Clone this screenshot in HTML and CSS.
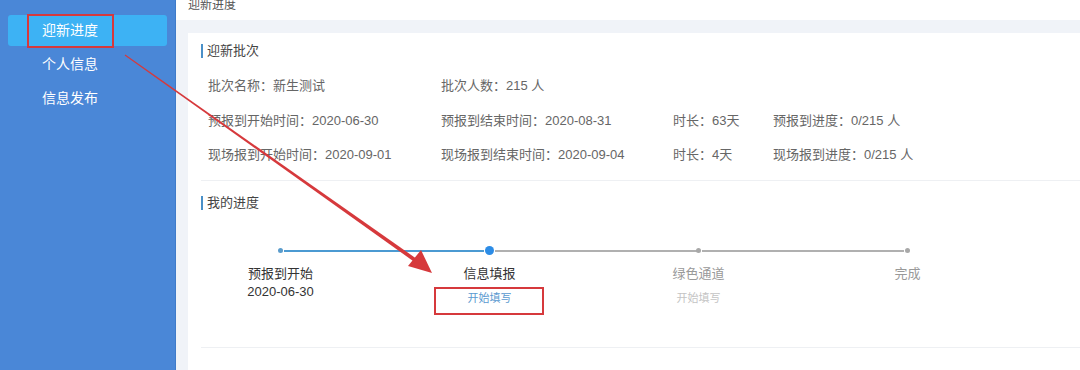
FILE: index.html
```html
<!DOCTYPE html>
<html lang="zh-CN">
<head>
    <meta charset="UTF-8">
    <title>迎新进度</title>
    <link rel="stylesheet" href="styles.css">
</head>
<body>
    <div class="app">
        <div class="sidebar">
            <div class="nav-item active">迎新进度</div>
            <div class="nav-item">个人信息</div>
            <div class="nav-item">信息发布</div>
        </div>

        <div class="main">
            <div class="topbar">迎新进度</div>

            <div class="card">
                <div class="section-title">迎新批次</div>
                <div class="info-grid">
                    <div>批次名称：新生测试</div>
                    <div>批次人数：215 人</div>
                    <div></div>
                    <div></div>

                    <div>预报到开始时间：2020-06-30</div>
                    <div>预报到结束时间：2020-08-31</div>
                    <div>时长：63天</div>
                    <div>预报到进度：0/215 人</div>

                    <div>现场报到开始时间：2020-09-01</div>
                    <div>现场报到结束时间：2020-09-04</div>
                    <div>时长：4天</div>
                    <div>现场报到进度：0/215 人</div>
                </div>

                <div class="divider"></div>

                <div class="section-title">我的进度</div>
                <div class="steps">
                    <div class="step done">
                        <div class="step-head"><span class="dot"></span></div>
                        <div class="step-title">预报到开始</div>
                        <div class="step-desc">2020-06-30</div>
                    </div>
                    <div class="step current">
                        <div class="step-head"><span class="dot"></span></div>
                        <div class="step-title">信息填报</div>
                        <div class="step-link">开始填写</div>
                    </div>
                    <div class="step">
                        <div class="step-head"><span class="dot"></span></div>
                        <div class="step-title">绿色通道</div>
                        <div class="step-link">开始填写</div>
                    </div>
                    <div class="step last">
                        <div class="step-head"><span class="dot"></span></div>
                        <div class="step-title">完成</div>
                    </div>
                </div>

                <div class="divider bottom"></div>
            </div>
        </div>
    </div>

    <!-- 标注：红框与箭头 -->
    <svg class="annotations" width="1080" height="370" viewBox="0 0 1080 370">
        <rect x="28" y="15" width="85" height="32" fill="none" stroke="#d6393c" stroke-width="2"/>
        <rect x="435" y="288" width="108" height="26" fill="none" stroke="#d6393c" stroke-width="2"/>
        <polygon points="124.7,55.4 125.3,54.6 417.2,259.2 414.8,262.2" fill="#d6393c"/>
        <polygon points="432,273 408,266 421,250" fill="#d6393c"/>
    </svg>
</body>
</html>
```

FILE: styles.css
```css
body {
    margin: 0;
    width: 1080px;
    height: 370px;
    overflow: hidden;
    font-family: "Liberation Sans", "Noto Sans CJK SC", sans-serif;
    color: #333;
    position: relative;
}
.app {
    display: flex;
    height: 370px;
}
.sidebar {
    width: 159px;
    padding: 15px 8px;
    background-color: #4a87d7;
    border-right: 1px solid #3f7bc9;
}
.nav-item {
    height: 31px;
    line-height: 31px;
    padding-left: 34px;
    margin-bottom: 3px;
    color: #fff;
    font-size: 14px;
    border-radius: 3px;
}
.nav-item.active {
    background-color: #3db2f4;
}
.main {
    flex: 1;
    background-color: #f0f3f8;
    display: flex;
    flex-direction: column;
}
.topbar {
    height: 20px;
    background: #fff;
    padding-left: 12px;
    font-size: 12px;
    line-height: 10px;
    color: #555;
    margin-bottom: 13px;
}
.card {
    flex: 1;
    margin-left: 12px;
    background: #fff;
    padding: 11px 0 0 13px;
}
.section-title {
    height: 14px;
    line-height: 14px;
    border-left: 2px solid #4a90c8;
    padding-left: 4px;
    font-size: 13px;
    color: #444;
}
.info-grid {
    display: grid;
    grid-template-columns: 233px 232px 100px auto;
    grid-auto-rows: 34.5px;
    padding: 18px 0 0 7px;
    font-size: 13px;
    color: #666;
}
.info-grid div {
    line-height: 20px;
}
.divider {
    height: 1px;
    background: #eef0f3;
    margin: 0 0 15px;
}
.divider.bottom {
    margin: 0;
}
.steps {
    display: flex;
    margin: 36px 0 0 -25px;
    height: 101px;
}
.step {
    width: 209px;
    text-align: center;
}
.step-head {
    position: relative;
    height: 10px;
}
.dot {
    display: inline-block;
    width: 5px;
    height: 5px;
    margin-top: 2px;
    border-radius: 50%;
    background: #a8a8a8;
    vertical-align: top;
}
.step-head::after {
    content: "";
    position: absolute;
    left: 108px;
    width: 202px;
    top: 4px;
    height: 2px;
    background: #b0b0b0;
}
.step.done .dot {
    background: #5a9ccc;
}
.step.done .step-head::after {
    background: #4b9ad2;
    left: 108px;
    width: 200px;
}
.step.current .dot {
    width: 9px;
    height: 9px;
    margin-top: 0;
    background: #2c8ce6;
}
.step.current .step-head::after {
    left: 110px;
}
.step.last .step-head::after {
    display: none;
}
.step-title {
    margin-top: 9px;
    font-size: 13px;
    line-height: 18px;
    color: #999;
}
.step.done .step-title,
.step.current .step-title {
    color: #333;
}
.step-desc {
    font-size: 13px;
    line-height: 18px;
    color: #333;
}
.step-link {
    margin-top: 8px;
    font-size: 11px;
    line-height: 14px;
    color: #c4c4c4;
}
.step.current .step-link {
    color: #5b9ad0;
}
.annotations {
    position: absolute;
    left: 0;
    top: 0;
    pointer-events: none;
}
```
